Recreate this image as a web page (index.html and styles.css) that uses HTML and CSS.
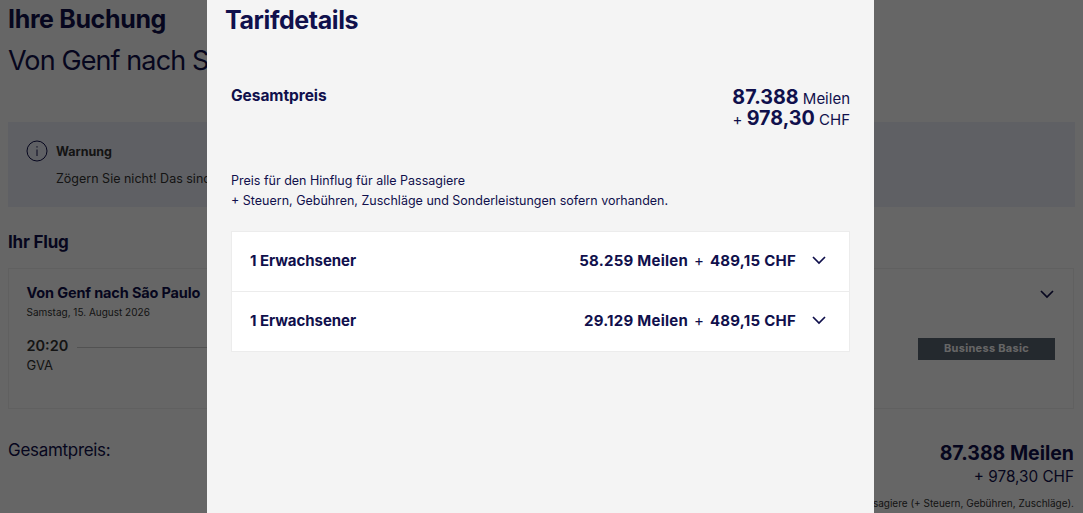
FILE: index.html
```html
<!DOCTYPE html>
<html lang="de">
<head>
<meta charset="utf-8">
<title>Tarifdetails</title>
<link rel="stylesheet" href="styles.css">
</head>
<body>
<main class="page">
  <h1 class="page-title">Ihre Buchung</h1>
  <h2 class="page-route">Von Genf nach São Paulo</h2>
  <section class="notice">
    <svg class="notice-icon" viewBox="0 0 22 22" aria-hidden="true"><circle cx="11" cy="11" r="10" /><path d="M11 9.5v6.5M11 6.2v1.4" /></svg>
    <div class="notice-content">
      <div class="notice-title">Warnung</div>
      <div class="notice-text">Zögern Sie nicht! Das sind</div>
    </div>
  </section>
  <h3 class="section-title">Ihr Flug</h3>
  <section class="flight">
    <div class="flight-main">
      <div class="flight-name">Von Genf nach São Paulo</div>
      <div class="flight-date">Samstag, 15. August 2026</div>
      <div class="flight-leg">
        <div>
          <div class="flight-time">20:20</div>
          <div class="flight-code">GVA</div>
        </div>
        <div class="flight-line"></div>
      </div>
    </div>
    <div class="flight-side">
      <svg class="chevron chevron-page" viewBox="0 0 14 9" aria-hidden="true"><path d="M1 1l6 6 6-6" /></svg>
      <div class="badge">Business Basic</div>
    </div>
  </section>
  <section class="summary">
    <div class="summary-label">Gesamtpreis:</div>
    <div class="summary-values">
      <div class="summary-miles">87.388 Meilen</div>
      <div class="summary-cash">+ 978,30 CHF</div>
      <div class="summary-note">Preis für den Hinflug für alle Passagiere (+ Steuern, Gebühren, Zuschläge).</div>
    </div>
  </section>
</main>

<div class="overlay"></div>

<aside class="modal">
  <h2 class="modal-title">Tarifdetails</h2>
  <div class="modal-body">
    <div class="total">
      <div class="total-label">Gesamtpreis</div>
      <div class="total-values">
        <div><strong>87.388</strong> Meilen</div>
        <div>+ <strong>978,30</strong> CHF</div>
      </div>
    </div>
    <p class="desc">Preis für den Hinflug für alle Passagiere<br>+ Steuern, Gebühren, Zuschläge und Sonderleistungen sofern vorhanden.</p>
    <div class="rows">
      <div class="row">
        <span class="row-label">1 Erwachsener</span>
        <span class="row-price">58.259 Meilen <span class="plus">+</span> 489,15 CHF</span>
        <svg class="chevron" viewBox="0 0 14 9" aria-hidden="true"><path d="M1 1l6 6 6-6" /></svg>
      </div>
      <div class="row">
        <span class="row-label">1 Erwachsener</span>
        <span class="row-price">29.129 Meilen <span class="plus">+</span> 489,15 CHF</span>
        <svg class="chevron" viewBox="0 0 14 9" aria-hidden="true"><path d="M1 1l6 6 6-6" /></svg>
      </div>
    </div>
  </div>
</aside>
</body>
</html>
```
FILE: styles.css
```css
* { box-sizing: border-box; }
html, body { margin: 0; height: 513px; overflow: hidden; }
body {
  background: #fff;
  color: #10104c;
  font-family: Inter, "Liberation Sans", sans-serif;
}
.page { padding: 4px 8px 0; height: 513px; overflow: hidden; }
.page-title { margin: 0; font-size: 25px; line-height: 30px; font-weight: 700; letter-spacing: -0.35px; }
.page-route { margin: 9px 0 0; font-size: 27px; line-height: 36px; font-weight: 400; letter-spacing: -0.9px; white-space: nowrap; }
.notice {
  margin-top: 43px;
  height: 85px;
  padding: 18px 18px;
  background: #eef1f9;
  display: flex;
  gap: 8px;
}
.notice-icon { width: 22px; height: 22px; fill: none; stroke: #10104c; stroke-width: 1; flex: none; }
.notice-content { color: #333; padding-top: 1px; }
.notice-title { font-size: 12.5px; line-height: 22px; font-weight: 700; }
.notice-text { font-size: 12.5px; line-height: 22px; margin-top: 5px; white-space: nowrap; }
.section-title { margin: 24px 0 0; font-size: 17px; line-height: 22px; font-weight: 700; letter-spacing: -0.2px; }
.flight {
  margin-top: 15px;
  height: 141px;
  width: 1066px;
  border: 1px solid #f0f0f0;
  padding: 14px 18px 0 17.5px;
  display: flex;
  justify-content: space-between;
}
.flight-main { flex: 1; }
.flight-name { font-size: 14.5px; line-height: 20px; font-weight: 700; letter-spacing: -0.15px; }
.flight-date { font-size: 10px; line-height: 16px; margin-top: 1px; color: #333; }
.flight-leg { display: flex; gap: 9px; margin-top: 16px; }
.flight-time { font-size: 14.5px; line-height: 20px; font-weight: 600; color: #333; }
.flight-code { font-size: 13px; line-height: 18px; color: #333; }
.flight-line { flex: none; width: 200px; height: 1px; margin-top: 11px; background: #ccc; }
.flight-side { width: 137px; display: flex; flex-direction: column; align-items: flex-end; }
.chevron-page { margin: 7px 1px 0 0; }
.badge {
  margin-top: 39px;
  width: 137px;
  height: 22px;
  background: #5a6673;
  color: #fff;
  font-size: 11px;
  line-height: 20px;
  font-weight: 700;
  letter-spacing: 0.3px;
  text-align: center;
}
.summary { display: flex; justify-content: space-between; margin-top: 27px; }
.summary-label { font-size: 17px; line-height: 28px; letter-spacing: -0.3px; }
.summary-values { text-align: right; padding: 4px 1px 0 0; }
.summary-miles { font-size: 19.5px; line-height: 26px; font-weight: 700; }
.summary-cash { font-size: 15.3px; line-height: 22px; }
.summary-note { font-size: 10px; line-height: 16px; margin-top: 7px; color: #333; }

.overlay { position: fixed; inset: 0; background: rgba(0, 0, 0, 0.6); }
.modal {
  position: fixed;
  top: 0;
  bottom: 0;
  left: 207px;
  width: 667px;
  background: #f4f4f4;
  padding: 5px 24px 0 18px;
}
.modal-title { margin: 0; font-size: 25px; line-height: 30px; font-weight: 700; letter-spacing: -0.4px; }
.modal-body { padding-left: 6px; }
.total { display: flex; justify-content: space-between; margin-top: 50px; }
.total-label { font-size: 15.5px; line-height: 22px; font-weight: 700; letter-spacing: -0.05px; }
.total-values { text-align: right; font-size: 15px; line-height: 21px; height: 44px; padding-top: 3px; }
.total-values strong { font-size: 19.7px; line-height: 1; font-weight: 700; }
.desc { margin: 42px 0 0; font-size: 12.5px; line-height: 20px; }
.rows { margin-top: 20px; background: #fff; border: 1px solid #ececec; }
.row {
  height: 59px;
  display: flex;
  align-items: center;
  padding: 0 23px 2px 18px;
  font-size: 15px;
  font-weight: 700;
}
.row + .row { height: 60px; border-top: 1px solid #ececec; }
.row-label { flex: 1; letter-spacing: -0.05px; }
.row-price { letter-spacing: 0.25px; }
.plus { font-weight: 400; margin: 0 2px; }
.chevron { width: 14px; height: 9px; fill: none; stroke: #10104c; stroke-width: 1.7; margin-left: 16px; flex: none; }
```
